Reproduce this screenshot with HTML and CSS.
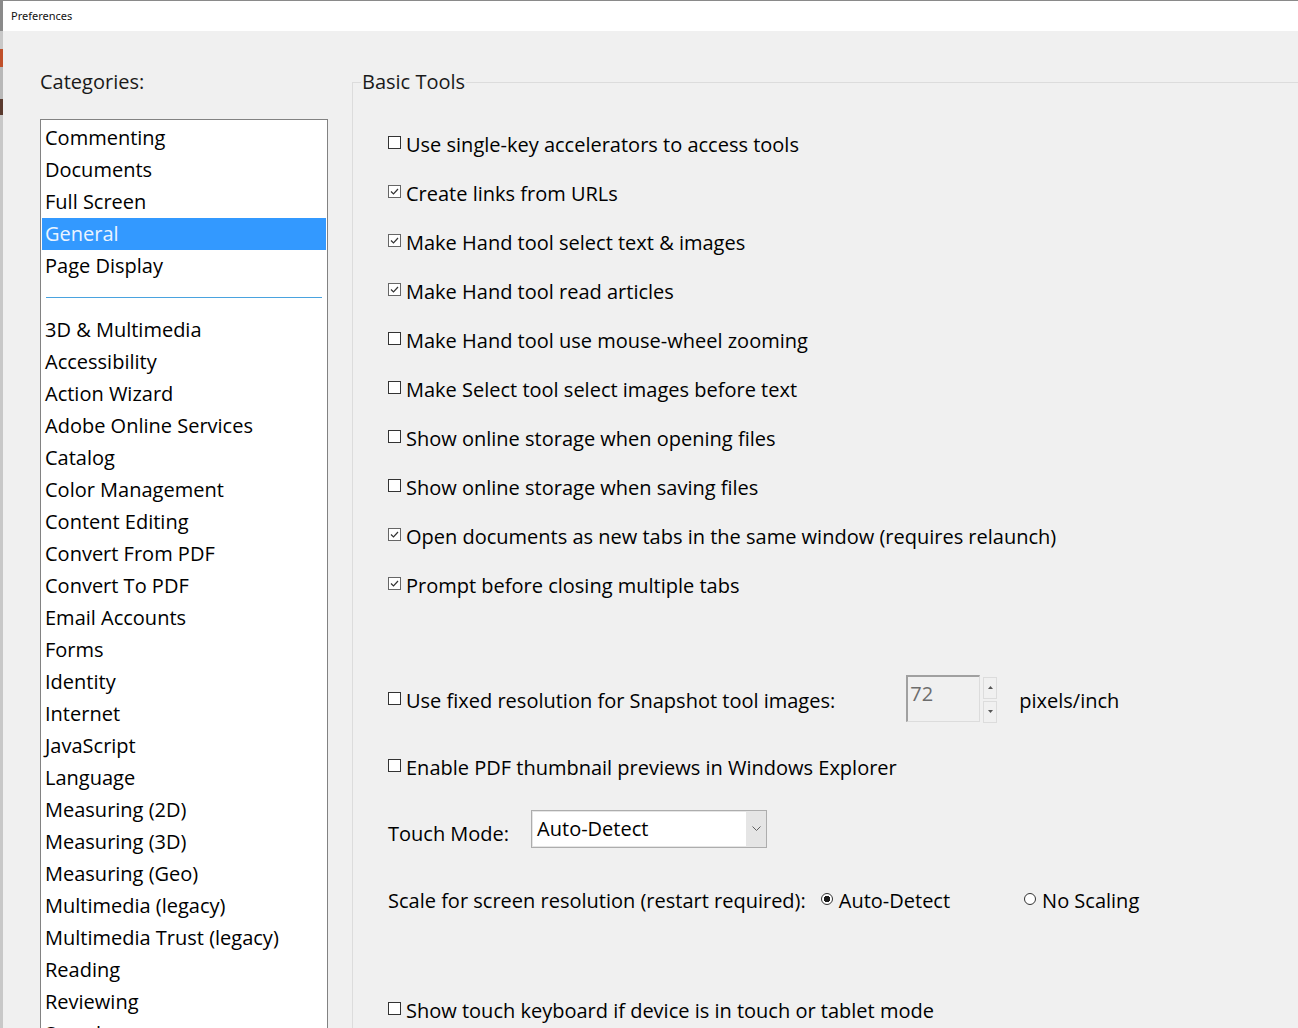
FILE: index.html
```html
<!DOCTYPE html>
<html lang="en">
<head>
  <meta charset="UTF-8">
  <title>Preferences</title>
  <link rel="stylesheet" href="styles.css">
</head>
<body>

  <div class="titlebar">Preferences</div>

  <div class="window">
    <div class="edge"></div>

    <!-- Categories list -->
    <div class="categories">
      <div class="cat-title">Categories:</div>
      <div class="listbox">
        <div class="item">Commenting</div>
        <div class="item">Documents</div>
        <div class="item">Full Screen</div>
        <div class="item selected">General</div>
        <div class="item">Page Display</div>
        <div class="separator"></div>
        <div class="item">3D &amp; Multimedia</div>
        <div class="item">Accessibility</div>
        <div class="item">Action Wizard</div>
        <div class="item">Adobe Online Services</div>
        <div class="item">Catalog</div>
        <div class="item">Color Management</div>
        <div class="item">Content Editing</div>
        <div class="item">Convert From PDF</div>
        <div class="item">Convert To PDF</div>
        <div class="item">Email Accounts</div>
        <div class="item">Forms</div>
        <div class="item">Identity</div>
        <div class="item">Internet</div>
        <div class="item">JavaScript</div>
        <div class="item">Language</div>
        <div class="item">Measuring (2D)</div>
        <div class="item">Measuring (3D)</div>
        <div class="item">Measuring (Geo)</div>
        <div class="item">Multimedia (legacy)</div>
        <div class="item">Multimedia Trust (legacy)</div>
        <div class="item">Reading</div>
        <div class="item">Reviewing</div>
        <div class="item">Search</div>
      </div>
    </div>

    <!-- Settings panel -->
    <fieldset class="group">
      <legend>Basic Tools</legend>

      <div class="options">
        <div class="opt"><span class="box"></span>Use single-key accelerators to access tools</div>
        <div class="opt"><span class="box checked"></span>Create links from URLs</div>
        <div class="opt"><span class="box checked"></span>Make Hand tool select text &amp; images</div>
        <div class="opt"><span class="box checked"></span>Make Hand tool read articles</div>
        <div class="opt"><span class="box"></span>Make Hand tool use mouse-wheel zooming</div>
        <div class="opt"><span class="box"></span>Make Select tool select images before text</div>
        <div class="opt"><span class="box"></span>Show online storage when opening files</div>
        <div class="opt"><span class="box"></span>Show online storage when saving files</div>
        <div class="opt"><span class="box checked"></span>Open documents as new tabs in the same window (requires relaunch)</div>
        <div class="opt"><span class="box checked"></span>Prompt before closing multiple tabs</div>

        <div class="opt snapshot">
          <span class="box"></span>Use fixed resolution for Snapshot tool images:
          <div class="spinner">
            <div class="spin-value">72</div>
            <div class="spin-buttons">
              <div class="spin-btn"><svg width="5" height="3" viewBox="0 0 5 3"><path d="M0 3 L2.5 0 L5 3 Z" fill="#555"/></svg></div>
              <div class="spin-btn"><svg width="5" height="3" viewBox="0 0 5 3"><path d="M0 0 L2.5 3 L5 0 Z" fill="#555"/></svg></div>
            </div>
          </div>
          <span class="unit">pixels/inch</span>
        </div>

        <div class="opt thumbs"><span class="box"></span>Enable PDF thumbnail previews in Windows Explorer</div>

        <div class="opt touch">
          <span class="plain">Touch Mode:</span>
          <div class="select">
            <div class="select-value">Auto-Detect</div>
            <div class="select-arrow"><svg width="9" height="5" viewBox="0 0 9 5"><path d="M0.5 0.5 L4.5 4.5 L8.5 0.5" fill="none" stroke="#606060" stroke-width="1"/></svg></div>
          </div>
        </div>

        <div class="opt scale">
          <span class="plain">Scale for screen resolution (restart required):</span>
          <span class="radio on"></span><span class="radio-label first">Auto-Detect</span>
          <span class="radio"></span><span class="radio-label">No Scaling</span>
        </div>

        <div class="opt keyboard"><span class="box"></span>Show touch keyboard if device is in touch or tablet mode</div>
      </div>
    </fieldset>
  </div>

</body>
</html>
```

FILE: styles.css
```css
body {
  margin: 0;
  background: #f0f0f0;
  font-family: "Open Sans", "Noto Sans", sans-serif;
  color: #000;
  overflow: hidden;
  height: 1028px;
}

.titlebar {
  height: 30px;
  line-height: 30px;
  background: #fff;
  border-top: 1px solid #8a8a8a;
  border-left: 3px solid #8a8a8a;
  padding-left: 8px;
  font-family: "Noto Sans", sans-serif;
  font-size: 11px;
  color: #111;
}

.window {
  display: flex;
  height: 997px;
  overflow: hidden;
}

.edge {
  width: 3px;
  flex: none;
  background: linear-gradient(to bottom,
    #c8c8c8 0, #c8c8c8 18px,
    #c0502a 18px, #c0502a 36px,
    #b8b8b8 36px, #b8b8b8 68px,
    #5a3a2e 68px, #5a3a2e 84px,
    #c8c8c8 84px);
}

.categories {
  width: 288px;
  flex: none;
  padding-left: 37px;
}

.cat-title {
  font-size: 20px;
  color: #1a1a1a;
  margin-top: 38px;
  height: 26px;
  line-height: 26px;
}

.listbox {
  margin-top: 24px;
  height: 1000px;
  background: #fff;
  border: 1px solid #828282;
  padding: 2px 1px 0 1px;
  overflow: hidden;
}

.item {
  height: 32px;
  line-height: 32px;
  padding-left: 3px;
  font-size: 20px;
  white-space: nowrap;
}

.item.selected {
  background: #3399ff;
  color: #eaf4ff;
}

.separator {
  height: 15px;
  margin: 0 4px 16px 4px;
  border-bottom: 1px solid #4aa3df;
}

.group {
  flex: 1;
  margin: 38px 0 0 24px;
  padding: 0 0 0 8px;
  border: none;
  border-top: 1px solid #dcdcdc;
  border-left: 1px solid #dcdcdc;
  min-width: 0;
}

.group legend {
  padding: 0 1px;
  font-size: 20px;
  color: #1a1a1a;
  line-height: 26px;
}

.options {
  padding-left: 27px;
  margin-top: 25px;
}

.opt {
  height: 49px;
  display: flex;
  align-items: center;
  font-size: 20px;
  white-space: nowrap;
}

.box {
  width: 11px;
  height: 11px;
  border: 1px solid #333;
  background: #fff;
  margin: 0 5px 0 0;
  flex: none;
  position: relative;
  top: -2px;
}

.box.checked {
  border-color: #666;
  background: #fff url("data:image/svg+xml,%3Csvg xmlns='http://www.w3.org/2000/svg' width='11' height='11'%3E%3Cpath d='M2 5.5 L4.5 8 L9 3' fill='none' stroke='%23333' stroke-width='1.2'/%3E%3C/svg%3E") no-repeat center;
}

.snapshot {
  margin-top: 66px;
}

.spinner {
  display: flex;
  margin-left: 71px;
  gap: 3px;
  position: relative;
  top: -2px;
}

.spin-value {
  border: 1px solid #dcdcdc;
  border-top: 2px solid #a0a0a0;
  border-left: 2px solid #a0a0a0;
  color: #6d6d6d;
  padding-left: 2px;
  line-height: 34px;
  box-sizing: border-box;
  width: 74px;
  height: 47px;
}

.spin-buttons {
  display: flex;
  flex-direction: column;
  gap: 2px;
  padding-top: 2px;
}

.spin-btn {
  width: 12px;
  height: 20px;
  border: 1px solid #dcdcdc;
  display: flex;
  align-items: center;
  justify-content: center;
}

.unit {
  margin-left: 22px;
}

.thumbs {
  margin-top: 18px;
}

.touch {
  margin-top: 17px;
}

.plain {
  margin-right: 22px;
}

.select {
  display: flex;
  width: 236px;
  height: 38px;
  border: 1px solid #adadad;
  background: #e5e5e5;
  box-sizing: border-box;
  margin-top: -10px;
}

.select-value {
  flex: 1;
  background: #fff;
  margin: 1px 0 1px 1px;
  padding-left: 4px;
  line-height: 34px;
}

.select-arrow {
  width: 20px;
  display: flex;
  align-items: center;
  justify-content: center;
}

.scale {
  margin-top: 18px;
}

.scale .plain {
  margin-right: 15px;
}

.radio {
  width: 10px;
  height: 10px;
  border: 1px solid #333;
  border-radius: 50%;
  background: #fff;
  margin-right: 6px;
  flex: none;
  position: relative;
  top: -2px;
}

.radio.on {
  background: radial-gradient(circle, #1a1a1a 0, #1a1a1a 3px, #fff 3.5px);
}

.radio-label.first {
  margin-right: 74px;
}

.keyboard {
  margin-top: 61px;
}
```
